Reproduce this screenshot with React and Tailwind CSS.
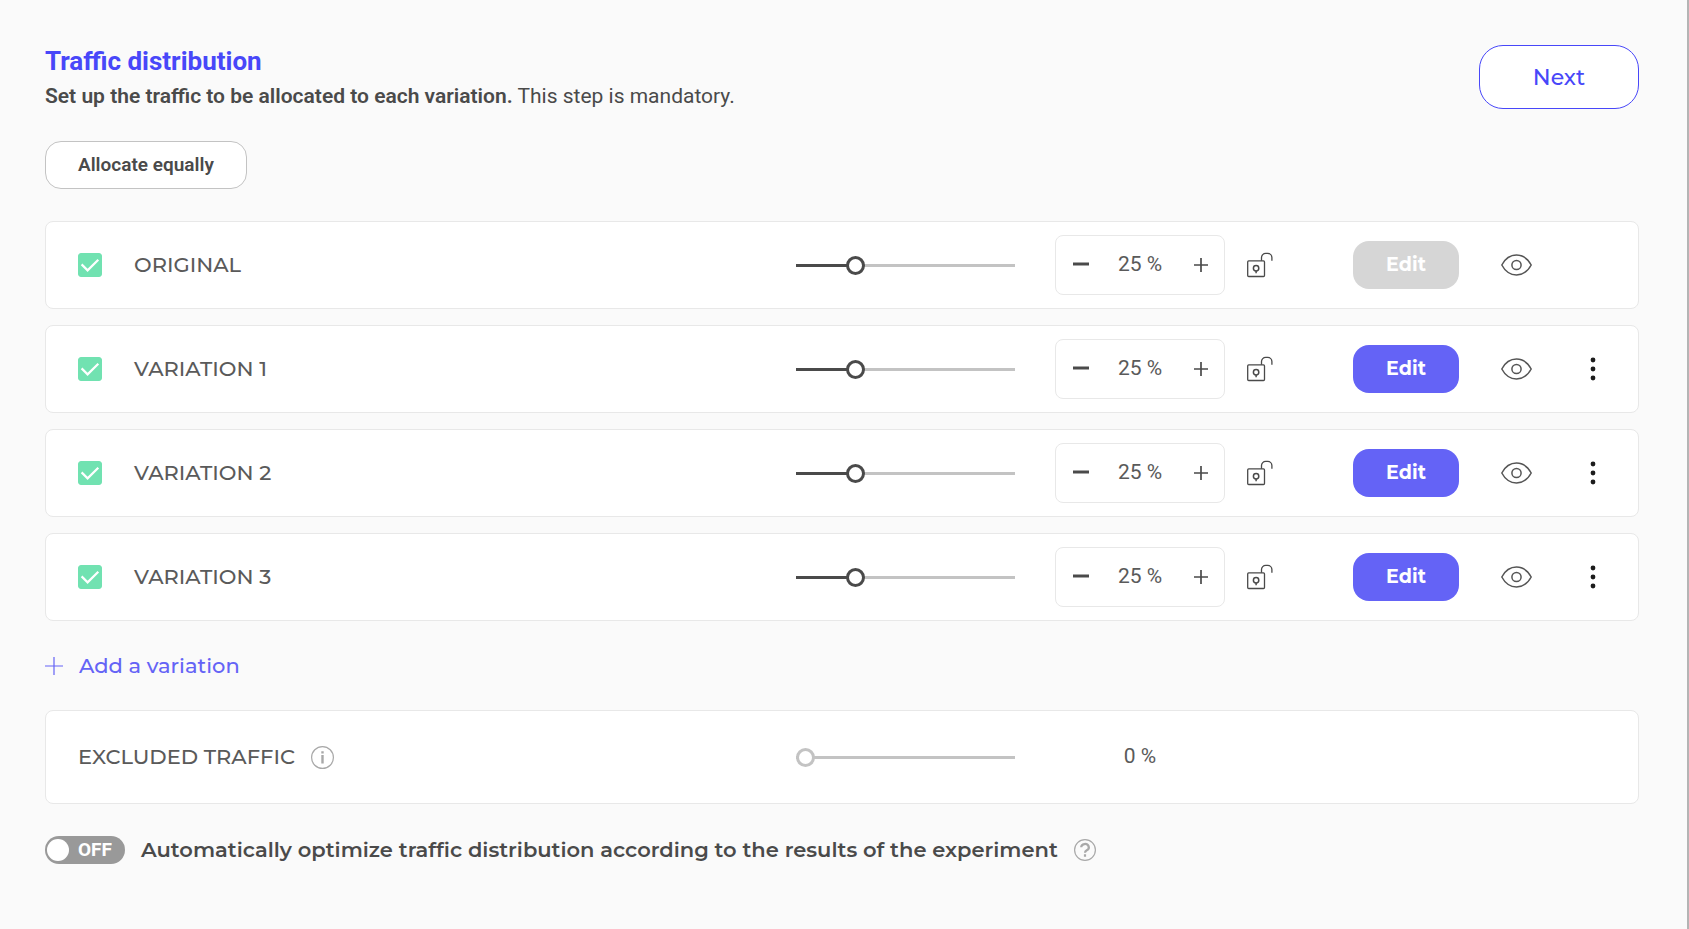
import React, { useState } from 'react';

const initialVariations = [
  { id: 0, name: 'ORIGINAL', traffic: 25, original: true },
  { id: 1, name: 'VARIATION 1', traffic: 25 },
  { id: 2, name: 'VARIATION 2', traffic: 25 },
  { id: 3, name: 'VARIATION 3', traffic: 25 },
];

const LockIcon = () => (
  <svg width="26" height="26" viewBox="0 0 26 26" fill="none" stroke="#4a4a4a" strokeWidth="1.3">
    <rect x="0.7" y="8.9" width="16.8" height="15.6" rx="1" />
    <path d="M14.5 8.7V5.6a4.200 4.200 0 0 1 4.200-4.200h2a4.200 4.200 0 0 1 4.200 4.200V8.7" />
    <circle cx="9.1" cy="16.200" r="2.700" strokeWidth="1.500" />
    <path d="M9.1 18.900v2.400" strokeWidth="1.500" />
  </svg>
);

const EyeIcon = () => (
  <svg width="32" height="22" viewBox="0 0 32 22" fill="none" stroke="#555" strokeWidth="1.5">
    <path d="M0.8 11C4 5 9 1.100 15.500 1.100s11.500 3.900 14.700 9.900C27 17 22 20.900 15.500 20.900S4 17 0.800 11z" />
    <circle cx="15.500" cy="11" r="4.600" />
  </svg>
);

const Slider = ({ label, value, onChange, muted }) => {
  const fill = muted ? '#c3c3c3' : '#4a4a4a';
  return (
    <input
      type="range"
      aria-label={label}
      min="0"
      max="100"
      value={value}
      onChange={(e) => onChange(Number(e.target.value))}
      style={{ backgroundImage: `linear-gradient(to right, ${fill} ${value}%, #c3c3c3 ${value}%)` }}
      className={`w-[219px] h-[3px] shrink-0 appearance-none cursor-pointer [&::-webkit-slider-thumb]:appearance-none [&::-webkit-slider-thumb]:size-[19px] [&::-webkit-slider-thumb]:rounded-full [&::-webkit-slider-thumb]:border-3 [&::-webkit-slider-thumb]:bg-white ${
        muted
          ? '[&::-webkit-slider-thumb]:border-[#c3c3c3]'
          : '[&::-webkit-slider-thumb]:border-[#4a4a4a]'
      }`}
    />
  );
};

const VariationRow = ({ variation, onChange }) => {
  const { id, name, traffic, original } = variation;

  return (
    <li className="flex items-center h-[88px] px-8 bg-white border border-[#e8e8e8] rounded-lg">
      <span className="relative size-6 mr-8 shrink-0">
        <input
          type="checkbox"
          id={`variation-${id}`}
          defaultChecked
          className="peer block size-6 appearance-none rounded-[3px] border border-[#71e2b1] checked:bg-[#71e2b1]"
        />
        <svg
          viewBox="0 0 24 24"
          className="absolute inset-0 size-6 pointer-events-none hidden peer-checked:block"
          fill="none"
          stroke="#fff"
          strokeWidth="2.2"
        >
          <path d="M3.600 11.400l6 6L20.300 6.700" />
        </svg>
      </span>
      <label htmlFor={`variation-${id}`} className="flex-1 text-[21px] font-medium">
        {name}
      </label>

      <Slider label={`${name} traffic`} value={traffic} onChange={onChange} />

      <div className="flex items-center justify-between w-[170px] h-[60px] ml-10 px-4 shrink-0 border border-[#e8e8e8] rounded-lg">
        <button type="button" aria-label="Decrease" onClick={() => onChange(traffic - 1)} className="w-[18px] pb-1">
          <svg width="18" height="14" viewBox="0 0 18 14" stroke="#4a4a4a" strokeWidth="3">
            <path d="M1 8h16" />
          </svg>
        </button>
        <span className="font-[Roboto] text-[21px]">{traffic} %</span>
        <button
          type="button"
          aria-label="Increase"
          onClick={() => onChange(traffic + 1)}
          className="flex justify-end w-[18px]"
        >
          <svg width="14" height="14" viewBox="0 0 14 14" stroke="#4a4a4a" strokeWidth="1.700">
            <path d="M0 7h14M7 0v14" />
          </svg>
        </button>
      </div>

      <button type="button" aria-label="Lock traffic" className="ml-[22px] w-[26px]">
        <LockIcon />
      </button>
      <button
        type="button"
        disabled={original}
        className="w-[106px] h-12 ml-20 rounded-2xl bg-[#6463f6] disabled:bg-[#d6d6d6] text-white text-[19px] font-bold"
      >
        Edit
      </button>
      <button type="button" aria-label="Preview" className="w-8 ml-[42px]">
        <EyeIcon />
      </button>
      <div className="w-[26px] ml-[47px] flex justify-center">
        {!original && (
          <button type="button" aria-label="More actions">
            <svg width="6" height="24" viewBox="0 0 6 24" fill="#1c1c1c">
              <circle cx="3" cy="3" r="2.400" />
              <circle cx="3" cy="12" r="2.400" />
              <circle cx="3" cy="21" r="2.400" />
            </svg>
          </button>
        )}
      </div>
    </li>
  );
};

const App = () => {
  const [variations, setVariations] = useState(initialVariations);
  const [excluded, setExcluded] = useState(0);

  const setTraffic = (id, traffic) =>
    setVariations(variations.map((v) => (v.id === id ? { ...v, traffic } : v)));

  const allocateEqually = () =>
    setVariations(variations.map((v) => ({ ...v, traffic: Math.floor(100 / variations.length) })));

  const addVariation = () =>
    setVariations([...variations, { id: variations.length, name: `VARIATION ${variations.length}`, traffic: 0 }]);

  return (
    <main className="min-h-screen pl-[45px] pr-12 py-[45px] bg-[#fafafa] border-r-2 border-[#b4b4b4] text-[#5a5a5a] font-[Montserrat,Inter,sans-serif]">
      <header className="flex items-start justify-between">
        <div className="font-[Roboto,sans-serif] text-[#4a4a4a]">
          <h1 className="text-[26px] leading-8 font-bold text-[#4847f9]">Traffic distribution</h1>
          <p className="mt-1 text-[21px] leading-[30px]">
            <strong className="font-semibold">Set up the traffic to be allocated to each variation.</strong> This
            step is mandatory.
          </p>
        </div>
        <button
          type="button"
          className="w-40 h-16 rounded-3xl border border-[#4847f9] bg-white text-[#4847f9] text-[22px] font-medium"
        >
          Next
        </button>
      </header>

      <button
        type="button"
        onClick={allocateEqually}
        className="h-12 px-8 mt-[30px] rounded-2xl border border-[#c3c3c3] bg-white text-[#4a4a4a] text-[19px] font-semibold font-[Roboto,sans-serif]"
      >
        Allocate equally
      </button>

      <ul className="flex flex-col gap-4 mt-8">
        {variations.map((v) => (
          <VariationRow key={v.id} variation={v} onChange={(traffic) => setTraffic(v.id, traffic)} />
        ))}
      </ul>

      <button
        type="button"
        onClick={addVariation}
        className="flex items-center gap-4 mt-[29px] text-[#6463f6] text-[21px] leading-8 font-medium"
      >
        <svg width="18" height="18" viewBox="0 0 18 18" stroke="currentColor" strokeWidth="1.200">
          <path d="M0 9h18M9 0v18" />
        </svg>
        Add a variation
      </button>

      <section className="flex items-center h-[94px] mt-7 px-8 bg-white border border-[#e8e8e8] rounded-lg">
        <div className="flex flex-1 items-center gap-4">
          <h2 className="text-[21px] font-medium">EXCLUDED TRAFFIC</h2>
          <svg width="23" height="23" viewBox="0 0 23 23" fill="none" stroke="#a8a8a8">
            <circle cx="11.500" cy="11.500" r="10.900" strokeWidth="1.200" />
            <path d="M11.500 9v8.500M11.500 5.300v2.200" strokeWidth="2.400" />
          </svg>
        </div>
        <Slider label="Excluded traffic" value={excluded} onChange={setExcluded} muted />
        <span className="w-[170px] ml-10 mr-[381px] text-center font-[Roboto] text-[21px]">{excluded} %</span>
      </section>

      <div className="flex items-center gap-4 mt-8 text-[#4a4a4a]">
        <label htmlFor="auto-optimize" className="relative flex h-7 w-20 shrink-0 items-center rounded-full bg-[#999]">
          <input
            type="checkbox"
            role="switch"
            id="auto-optimize"
            className="size-[22px] ml-[2px] appearance-none rounded-full bg-white"
          />
          <span className="ml-[9px] font-[Roboto,sans-serif] text-[19px] font-bold text-white">OFF</span>
        </label>
        <label htmlFor="auto-optimize" className="text-[21px] leading-7 font-semibold">
          Automatically optimize traffic distribution according to the results of the experiment
        </label>
        <svg width="22" height="22" viewBox="0 0 22 22" fill="none" stroke="#a8a8a8">
          <circle cx="11" cy="11" r="10.400" strokeWidth="1.200" />
          <path d="M7.200 8.300a3.800 3.300 0 1 1 5.600 2.900c-1.300.7-1.800 1.100-1.800 2.500M11 15.300v2.400" strokeWidth="2.200" />
        </svg>
      </div>
    </main>
  );
};

export default App;
